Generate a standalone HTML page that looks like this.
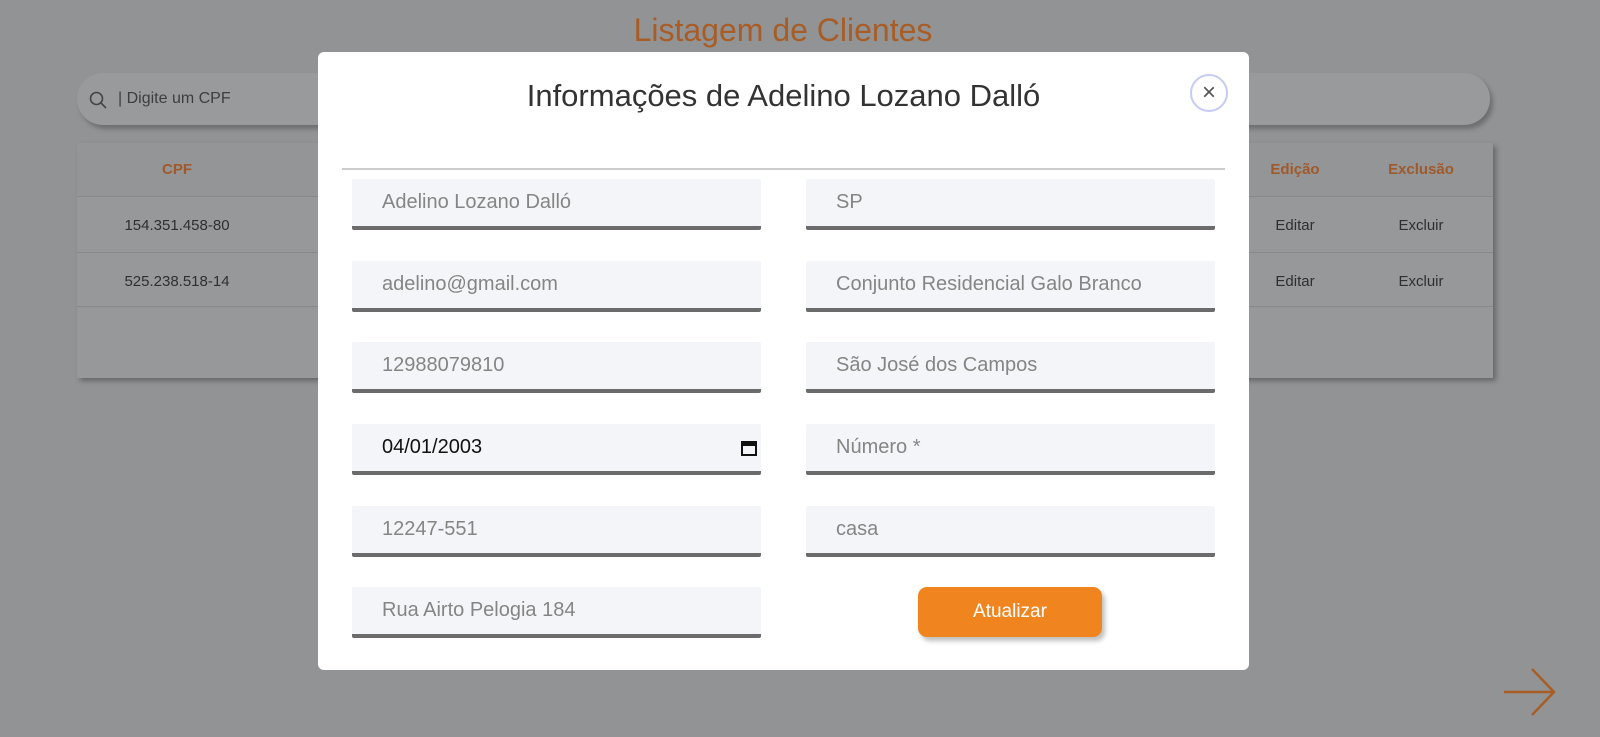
<!DOCTYPE html>
<html><head><meta charset="utf-8"><style>
*{box-sizing:border-box;margin:0;padding:0}
body{width:1600px;height:737px;background:#929395;font-family:"Liberation Sans",sans-serif;position:relative;overflow:hidden}
.title{position:absolute;left:0;width:1566px;top:12px;text-align:center;color:#a85d26;font-size:32px}
.search{position:absolute;left:77px;top:73px;width:1413px;height:52px;border-radius:26px;background:#999a9b;box-shadow:3px 4px 5px rgba(0,0,0,.25)}
.search span{position:absolute;left:41px;top:17px;font-size:16px;color:#3e3e3e}
.table{position:absolute;left:77px;top:143px;width:1416px;height:235px;background:#979899;box-shadow:3px 3px 5px rgba(0,0,0,.3)}
.row{position:absolute;left:0;width:100%;border-bottom:1px solid #888}
.c{position:absolute;font-size:15px;color:#2f2f2f;text-align:center;width:160px}
.h{color:#a0592a;font-weight:bold}
.modal{position:absolute;left:318px;top:52px;width:931px;height:618px;background:#fff;border-radius:6px}
.mt{position:absolute;left:0;width:100%;top:26px;text-align:center;font-size:31px;color:#333}
.close{position:absolute;left:872px;top:22px;width:38px;height:38px;border-radius:50%;border:2px solid #c7cbf4;text-align:center;line-height:33px;font-size:24px;color:#555}
.hr{position:absolute;left:24px;top:116px;width:883px;height:2px;background:#ccc}
.in{position:absolute;width:409px;height:51px;background:#f4f5f8;border-bottom:4px solid #6b6b6b;border-radius:2px;padding-left:30px;line-height:46px;font-size:20px;color:#858585}
.btn{position:absolute;left:600px;top:535px;width:184px;height:50px;background:#f0851f;border-radius:9px;color:#fff;text-align:center;line-height:50px;font-size:19px;box-shadow:3px 4px 5px rgba(0,0,0,.25)}
</style></head><body>
<div class="title">Listagem de Clientes</div>
<div class="search"><svg style="position:absolute;left:12px;top:18px" width="18" height="18" viewBox="0 0 18 18"><circle cx="7.5" cy="7.5" r="6" fill="none" stroke="#444" stroke-width="1.6"/><path d="M12 12l5 5" stroke="#444" stroke-width="1.6"/></svg><span>| Digite um CPF</span></div>
<div class="table">
<div class="row" style="top:0;height:54px;background:#949596"></div>
<div class="row" style="top:54px;height:56px"></div>
<div class="row" style="top:110px;height:54px"></div>
<div class="c h" style="left:20px;top:18px">CPF</div>
<div class="c" style="left:20px;top:74px">154.351.458-80</div>
<div class="c" style="left:20px;top:130px">525.238.518-14</div>
<div class="c h" style="left:1138px;top:18px">Edição</div>
<div class="c" style="left:1138px;top:74px">Editar</div>
<div class="c" style="left:1138px;top:130px">Editar</div>
<div class="c h" style="left:1264px;top:18px">Exclusão</div>
<div class="c" style="left:1264px;top:74px">Excluir</div>
<div class="c" style="left:1264px;top:130px">Excluir</div>
</div>
<div class="modal">
<div class="mt">Informações de Adelino Lozano Dalló</div>
<div class="close">×</div>
<div class="hr"></div>
<div class="in" style="left:34px;top:127px">Adelino Lozano Dalló</div>
<div class="in" style="left:34px;top:209px">adelino@gmail.com</div>
<div class="in" style="left:34px;top:290px">12988079810</div>
<div class="in" style="left:34px;top:372px;color:#111">04/01/2003<svg style="position:absolute;right:3px;top:15px" width="18" height="18" viewBox="0 0 18 18"><rect x="2" y="3" width="14" height="13" fill="none" stroke="#111" stroke-width="2"/><rect x="2" y="3" width="14" height="4" fill="#111"/></svg></div>
<div class="in" style="left:34px;top:454px">12247-551</div>
<div class="in" style="left:34px;top:535px">Rua Airto Pelogia 184</div>
<div class="in" style="left:488px;top:127px">SP</div>
<div class="in" style="left:488px;top:209px">Conjunto Residencial Galo Branco</div>
<div class="in" style="left:488px;top:290px">São José dos Campos</div>
<div class="in" style="left:488px;top:372px">Número *</div>
<div class="in" style="left:488px;top:454px">casa</div>
<div class="btn">Atualizar</div>
</div>
<svg style="position:absolute;left:1502px;top:667px" width="56" height="50" viewBox="0 0 56 50"><path d="M2 25H52M30 2L52 25L30 48" fill="none" stroke="#a85d26" stroke-width="2.5"/></svg>
</body></html>
